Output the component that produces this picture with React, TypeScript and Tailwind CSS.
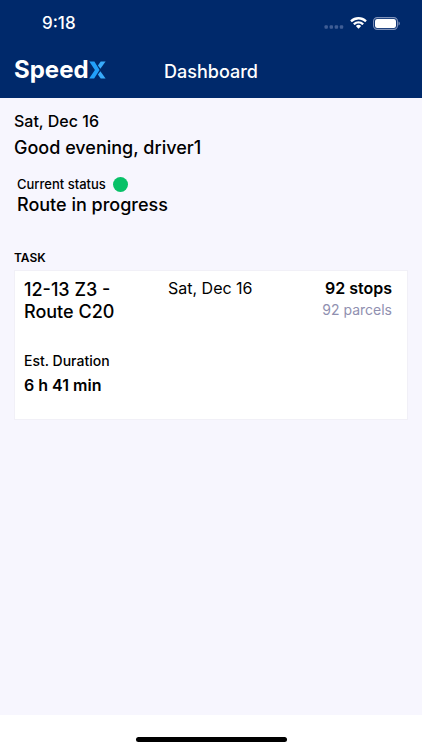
const task = {
  name: '12-13 Z3 - Route C20',
  date: 'Sat, Dec 16',
  stops: 92,
  parcels: 92,
  duration: '6 h 41 min',
};

function StatusBar() {
  return (
    <div className="flex h-[46px] items-center justify-between pr-[22px] pl-[42px] text-white">
      <span className="text-[17px] leading-6 font-medium">9:18</span>
      <div className="flex items-center gap-[6px]">
        <svg className="mt-2" width="20" height="4" viewBox="0 0 20 4" fill="#3f5d95">
          <rect x="0.5" y="0.3" width="3.4" height="3.4" rx="1" />
          <rect x="5.6" y="0.3" width="3.4" height="3.4" rx="1" />
          <rect x="10.7" y="0.3" width="3.4" height="3.4" rx="1" />
          <rect x="15.8" y="0.3" width="3.4" height="3.4" rx="1" />
        </svg>
        <svg width="17" height="12" viewBox="0 0 17 12" fill="currentColor">
          <path d="M8.5 2.5c2.4 0 4.7.9 6.4 2.6.1.1.3.1.5 0l1.2-1.3c.1-.1.1-.3 0-.5a11.7 11.7 0 0 0-16.2 0c-.1.2-.1.4 0 .5l1.2 1.3c.2.1.4.1.5 0a9.3 9.3 0 0 1 6.4-2.6Z" />
          <path d="M8.5 6.6c1.3 0 2.5.5 3.5 1.4.1.1.3.1.5 0l1.2-1.3c.1-.1.1-.3 0-.5a7.6 7.6 0 0 0-10.4 0c-.1.2-.1.4 0 .5l1.2 1.3c.2.1.4.1.5 0 1-.9 2.2-1.4 3.5-1.4Z" />
          <path d="M10.9 9.3c.1-.1.1-.3 0-.5a3.7 3.7 0 0 0-4.8 0c-.1.2-.1.4 0 .5l2.1 2.2c.2.2.4.2.6 0l2.1-2.2Z" />
        </svg>
        <svg width="27" height="13" viewBox="0 0 27 13" fill="none">
          <rect x="0.6" y="0.6" width="23.8" height="11.8" rx="3.6" stroke="#8093ba" strokeWidth="1.1" />
          <rect x="2" y="2" width="21" height="9" rx="2.2" fill="#fff" />
          <path d="M25.5 4.5v4c.8-.3 1.3-1.1 1.3-2s-.5-1.7-1.3-2Z" fill="#8093ba" />
        </svg>
      </div>
    </div>
  );
}

function Logo() {
  return (
    <div className="flex items-center pb-1">
      <span className="text-2xl leading-6 font-bold text-white">Speed</span>
      <svg width="17" height="18" viewBox="0 0 17 18">
        <path d="M0.3 0.5h5.1L10.6 9 5.1 17.5H0.2L5.9 9Z" fill="#22a0fa" />
        <path d="M11.7 0.5h4.9L11.4 7.7 8.9 4.6Z" fill="#38abfa" />
        <path d="M11.4 10.3l5.2 7.2h-4.9L8.9 13.4Z" fill="#38abfa" />
      </svg>
    </div>
  );
}

export default function App() {
  return (
    <div className="flex min-h-screen flex-col bg-[#f7f6fe] font-['Inter','Liberation_Sans',sans-serif] text-black">
      <header className="bg-[#00296b]">
        <StatusBar />
        <div className="grid grid-cols-[1fr_auto_1fr] items-center px-[14px] py-2">
          <Logo />
          <h1 className="py-2 text-lg leading-5 font-medium text-white">Dashboard</h1>
        </div>
      </header>

      <main className="flex-1 px-[14px] pt-[11px]">
        <p className="text-base leading-6 font-medium">{task.date}</p>
        <h2 className="mt-[3px] text-lg leading-6 font-medium">Good evening, driver1</h2>

        <section className="mt-4 pl-[3px]">
          <div className="flex items-center gap-[7px]">
            <span className="text-[13px] leading-4 font-medium">Current status</span>
            <span className="size-[15px] rounded-full bg-[#08c168]" />
          </div>
          <p className="mt-px text-lg leading-6 font-medium">Route in progress</p>
        </section>

        <section className="mt-[29px]">
          <h3 className="text-xs leading-6 font-semibold">TASK</h3>
          <article className="border border-[#f1f0f7] bg-white px-[9px] pt-2 pb-[22px]">
            <div className="flex items-start">
              <p className="mr-11 w-[100px] text-lg leading-[22px] font-medium">{task.name}</p>
              <p className="text-base leading-[18px]">{task.date}</p>
              <div className="ml-auto pr-[6px] text-right">
                <p className="text-base leading-[18px] font-semibold">{task.stops} stops</p>
                <p className="text-sm leading-[26px] text-[#9090b0]">{task.parcels} parcels</p>
              </div>
            </div>
            <p className="mt-[26px] text-sm leading-6 font-medium">Est. Duration</p>
            <p className="text-base leading-6 font-semibold">{task.duration}</p>
          </article>
        </section>
      </main>

      <footer className="flex h-[35px] items-end justify-center bg-white pb-2">
        <div className="h-[5px] w-[151px] rounded-full bg-black" />
      </footer>
    </div>
  );
}
